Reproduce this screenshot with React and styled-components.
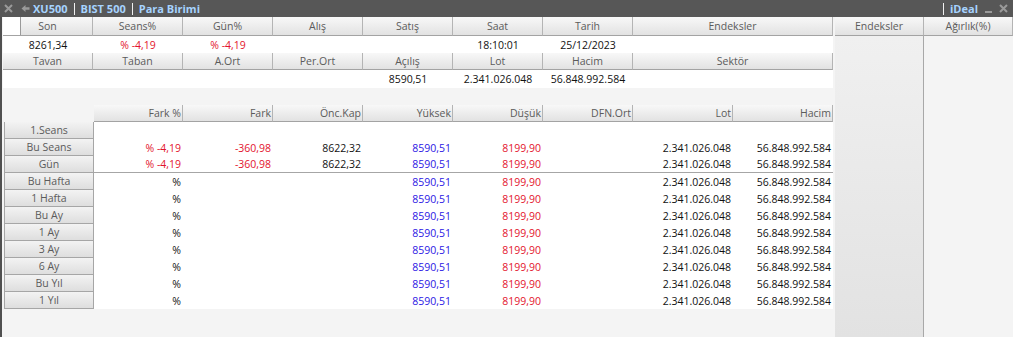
import React from 'react';
import styled, { createGlobalStyle } from 'styled-components';

const GlobalStyle = createGlobalStyle`
  html, body {
    margin: 0;
    padding: 0;
    background: #f4f4f4;
  }
  body {
    font-family: "Open Sans", "Noto Sans", sans-serif;
    font-size: 10.5px;
    color: #111;
  }
  * { box-sizing: border-box; }
`;

const tones = {
  black: '#111111',
  red: '#e3132d',
  blue: '#2c16e4',
};

const Window = styled.div`
  width: 1013px;
  height: 337px;
  display: flex;
  flex-direction: column;
  overflow: hidden;
  background: #f4f4f4;
`;

const TitleBar = styled.div`
  height: 17px;
  flex: none;
  background: #575757;
  display: flex;
  align-items: center;
  padding: 0 5px 0 4px;
  font-weight: 700;
  font-size: 11px;
`;

const TitleGroup = styled.div`
  display: flex;
  align-items: center;
  gap: 6px;
`;

const TitleText = styled.span`
  color: #a6d3ff;
  line-height: 17px;
`;

const TitleSep = styled.span`
  width: 1px;
  height: 12px;
  background: #f0f0f0;
`;

const IconBtn = styled.span`
  display: inline-flex;
  flex: none;
  width: 9px;
  height: 9px;
  margin-right: ${(p) => p.$mr || 0}px;
`;

const Spring = styled.div`
  flex: 1;
`;

const Body = styled.div`
  flex: 1;
  display: flex;
`;

const Main = styled.div`
  width: 833px;
  border-left: 2px solid #505050;
  padding-left: 1px;
  display: flex;
  flex-direction: column;
`;

const TopGrid = styled.div`
  display: grid;
  grid-template-columns: repeat(7, 90px) 200px;
`;

const HeaderCell = styled.div`
  height: ${(p) => p.$h || 17}px;
  border-bottom: 1px solid #a3a3a3;
  border-right: 1px solid #b4b4b4;
  background: linear-gradient(#f8f8f8, #e2e2e2);
  color: #5b5b5b;
  display: flex;
  align-items: center;
  justify-content: ${(p) => (p.$right ? 'flex-end' : 'center')};
  padding-right: ${(p) => (p.$right ? '1px' : '0')};
  white-space: nowrap;
`;

const CheckBox = styled.span`
  width: 18px;
  height: 100%;
  flex: none;
  background: #fff;
  border-right: 1px solid #9a9a9a;
`;

const HeaderLabel = styled.span`
  flex: 1;
  text-align: center;
  padding-right: 18px;
`;

const ValueCell = styled.div`
  height: ${(p) => p.$h || 17}px;
  background: #fff;
  color: ${(p) => tones[p.$tone || 'black']};
  display: flex;
  align-items: center;
  justify-content: center;
  white-space: nowrap;
`;

const Gap = styled.div`
  height: 17px;
`;

const BottomGrid = styled.div`
  display: grid;
  grid-template-columns: 90px 89px repeat(5, 90px) 100px 100px;
  margin-left: 1px;
`;

const Blank = styled.div`
  height: 17px;
`;

const RowLabel = styled.div`
  height: 17px;
  border: 1px solid #a6a6a6;
  border-top: 0;
  background: linear-gradient(#f3f3f3, #dedede);
  color: #5b5b5b;
  display: flex;
  align-items: center;
  justify-content: center;
  white-space: nowrap;
`;

const DataCell = styled.div`
  height: 17px;
  background: #fff;
  color: ${(p) => tones[p.$tone || 'black']};
  border-bottom: ${(p) => (p.$divider ? '1px solid #a6a6a6' : 'none')};
  display: flex;
  align-items: center;
  justify-content: flex-end;
  padding-right: 2px;
  white-space: nowrap;
`;

const Side = styled.div`
  width: 178px;
  margin-left: 2px;
  display: flex;
  flex-direction: column;
`;

const SideHeader = styled.div`
  display: grid;
  grid-template-columns: 89px 89px;
`;

const SideBody = styled.div`
  flex: 1;
  display: grid;
  grid-template-columns: 89px 89px;
`;

const SideCol = styled.div`
  background: ${(p) => (p.$shade ? 'linear-gradient(#f0f0f0, #e2e2e2)' : '#f4f4f4')};
  border-right: ${(p) => (p.$shade ? '1px solid #a8a8a8' : 'none')};
`;

const CloseIcon = ({ color = '#9a9a9a' }) => (
  <svg width="9" height="9" viewBox="0 0 9 9">
    <path d="M1 1 L8 8 M8 1 L1 8" stroke={color} strokeWidth="2" />
  </svg>
);

const BackIcon = () => (
  <svg width="9" height="9" viewBox="0 0 9 9">
    <path d="M0.5 4.5 L4.5 1 V3.2 H8.5 V5.8 H4.5 V8 Z" fill="#9a9a9a" />
  </svg>
);

const MinIcon = () => (
  <svg width="9" height="9" viewBox="0 0 9 9">
    <rect x="1" y="7" width="7" height="2" fill="#9a9a9a" />
  </svg>
);

const periods = [
  { label: '1.Seans', empty: true },
  { label: 'Bu Seans', full: true },
  { label: 'Gün', full: true, divider: true },
  { label: 'Bu Hafta' },
  { label: '1 Hafta' },
  { label: 'Bu Ay' },
  { label: '1 Ay' },
  { label: '3 Ay' },
  { label: '6 Ay' },
  { label: 'Bu Yıl' },
  { label: '1 Yıl' },
];

const bottomCols = ['Fark %', 'Fark', 'Önc.Kap', 'Yüksek', 'Düşük', 'DFN.Ort', 'Lot', 'Hacim'];

const rowValues = (p) => {
  if (p.empty) return Array(8).fill({ v: '' });
  return [
    { v: p.full ? '% -4,19' : '%', tone: p.full ? 'red' : 'black' },
    { v: p.full ? '-360,98' : '', tone: 'red' },
    { v: p.full ? '8622,32' : '' },
    { v: '8590,51', tone: 'blue' },
    { v: '8199,90', tone: 'red' },
    { v: '' },
    { v: '2.341.026.048' },
    { v: '56.848.992.584' },
  ];
};

export default function App() {
  return (
    <>
      <GlobalStyle />
      <Window>
        <TitleBar>
          <IconBtn $mr={8}><CloseIcon /></IconBtn>
          <IconBtn $mr={3}><BackIcon /></IconBtn>
          <TitleGroup>
            <TitleText>XU500</TitleText>
            <TitleSep />
            <TitleText>BIST 500</TitleText>
            <TitleSep />
            <TitleText>Para Birimi</TitleText>
          </TitleGroup>
          <Spring />
          <TitleGroup>
            <TitleSep />
            <TitleText>iDeal</TitleText>
            <IconBtn><MinIcon /></IconBtn>
            <IconBtn><CloseIcon /></IconBtn>
          </TitleGroup>
        </TitleBar>
        <Body>
          <Main>
            <TopGrid>
              <HeaderCell $h={19}>
                <CheckBox />
                <HeaderLabel>Son</HeaderLabel>
              </HeaderCell>
              {['Seans%', 'Gün%', 'Alış', 'Satış', 'Saat', 'Tarih', 'Endeksler'].map((h) => (
                <HeaderCell key={h} $h={19}>{h}</HeaderCell>
              ))}
              <ValueCell>8261,34</ValueCell>
              <ValueCell $tone="red">% -4,19</ValueCell>
              <ValueCell $tone="red">% -4,19</ValueCell>
              <ValueCell />
              <ValueCell />
              <ValueCell>18:10:01</ValueCell>
              <ValueCell>25/12/2023</ValueCell>
              <ValueCell />
              {['Tavan', 'Taban', 'A.Ort', 'Per.Ort', 'Açılış', 'Lot', 'Hacim', 'Sektör'].map((h) => (
                <HeaderCell key={h}>{h}</HeaderCell>
              ))}
              <ValueCell $h={18} />
              <ValueCell $h={18} />
              <ValueCell $h={18} />
              <ValueCell $h={18} />
              <ValueCell $h={18}>8590,51</ValueCell>
              <ValueCell $h={18}>2.341.026.048</ValueCell>
              <ValueCell $h={18}>56.848.992.584</ValueCell>
              <ValueCell $h={18} />
            </TopGrid>
            <Gap />
            <BottomGrid>
              <Blank />
              {bottomCols.map((h) => (
                <HeaderCell key={h} $right>{h}</HeaderCell>
              ))}
              {periods.map((p) => (
                <React.Fragment key={p.label}>
                  <RowLabel>{p.label}</RowLabel>
                  {rowValues(p).map((c, j) => (
                    <DataCell key={j} $tone={c.tone} $divider={p.divider}>{c.v}</DataCell>
                  ))}
                </React.Fragment>
              ))}
            </BottomGrid>
          </Main>
          <Side>
            <SideHeader>
              <HeaderCell $h={19}>Endeksler</HeaderCell>
              <HeaderCell $h={19}>Ağırlık(%)</HeaderCell>
            </SideHeader>
            <SideBody>
              <SideCol $shade />
              <SideCol />
            </SideBody>
          </Side>
        </Body>
      </Window>
    </>
  );
}
